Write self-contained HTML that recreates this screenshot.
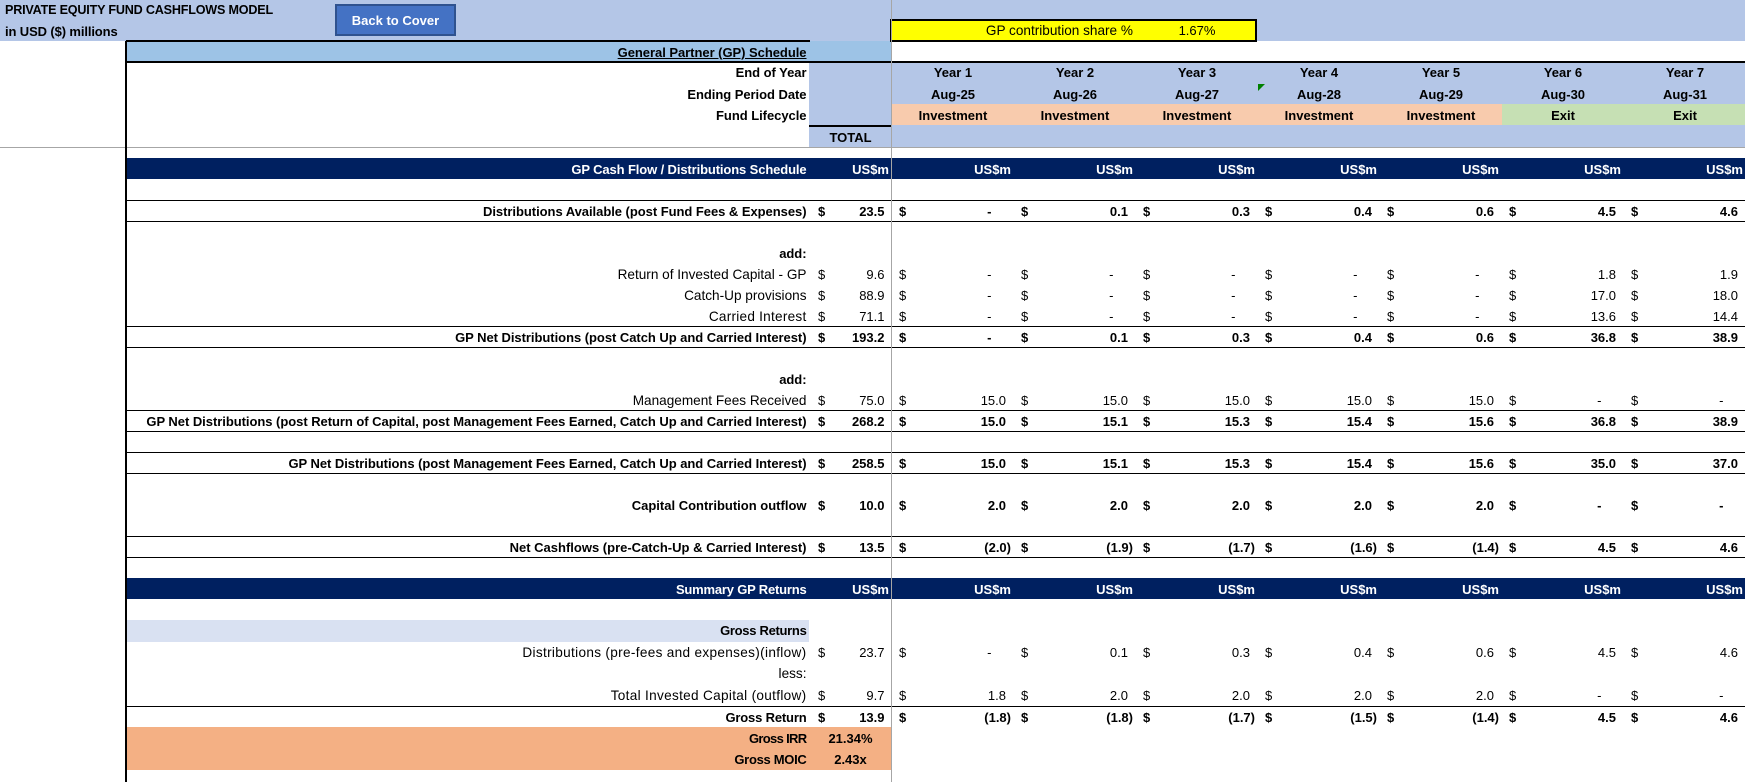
<!DOCTYPE html>
<html lang="en"><head><meta charset="utf-8"><title>GP Schedule</title>
<style>
html,body{margin:0;padding:0;background:#fff}
#s{position:relative;width:1745px;height:782px;overflow:hidden;background:#fff;font:13px/21px "Liberation Sans",Arial,sans-serif;color:#000}
#s div{position:absolute}
.t{background:#000}
.r{position:absolute;left:0;width:1745px;height:21px;margin:0}
.r.b{font-weight:bold}
.l{position:absolute;left:0;width:806.5px;text-align:right;white-space:nowrap;font-size:13.6px}
.b .l{font-size:13px;letter-spacing:-.04px}
.n .l{font-size:13px;letter-spacing:-.12px}
.r i{position:absolute;font-style:normal;top:0;height:21px;width:122px;padding-left:7px;box-sizing:border-box}
.r i:nth-of-type(1){left:809px;width:83px;padding-left:9px}
.r i:nth-of-type(1) u{right:7.5px}
.r i:nth-of-type(2){left:892px}
.r i:nth-of-type(3){left:1014px}
.r i:nth-of-type(4){left:1136px}
.r i:nth-of-type(5){left:1258px}
.r i:nth-of-type(6){left:1380px}
.r i:nth-of-type(7){left:1502px}
.r i:nth-of-type(8){left:1624px}
u{position:absolute;right:8px;top:0;text-decoration:none;white-space:nowrap}
u.p{right:3px}
.r i u.d{right:22.5px}
.n{color:#fff;font-weight:bold}
.n i{padding:0!important}
.n i u,.r.n i:nth-of-type(1) u{right:3px}
.c{text-align:center}
.c i{padding:0!important}
</style></head><body>
<div id="s">
<!-- fills -->
<div style="left:0;top:0;width:1745px;height:41px;background:#b4c6e7"></div>
<div style="left:126px;top:41px;width:766px;height:21px;background:#9dc3e6"></div>
<div style="left:809px;top:62px;width:936px;height:85px;background:#b4c6e7"></div>
<div style="left:892px;top:104px;width:610px;height:21px;background:#f8cbad"></div>
<div style="left:1502px;top:104px;width:243px;height:21px;background:#c6e0b4"></div>
<div style="left:126px;top:158px;width:1619px;height:21px;background:#002060"></div>
<div style="left:126px;top:578px;width:1619px;height:21px;background:#002060"></div>
<div style="left:126px;top:620px;width:683px;height:22px;background:#d9e1f2"></div>
<div style="left:126px;top:727px;width:766px;height:43px;background:#f4b084"></div>
<!-- yellow box -->
<div style="left:890px;top:19px;width:367px;height:23px;background:#ff0;border:2px solid #000;box-sizing:border-box"></div>
<!-- button -->
<div style="left:335px;top:4px;width:121px;height:32px;background:#4472c4;border:2px solid #2f528f;box-sizing:border-box;color:#fff;font-weight:bold;text-align:center;line-height:29px">Back to Cover</div>
<!-- lines -->
<div class="t" style="left:126px;top:40px;width:684px;height:2px"></div>
<div class="t" style="left:126px;top:61px;width:1619px;height:2px"></div>
<div class="t" style="left:809px;top:125px;width:83px;height:2px"></div>
<div style="left:0;top:147px;width:1745px;height:1px;background:#a6a6a6"></div>
<div class="t" style="left:126px;top:200px;width:1619px;height:1px"></div>
<div class="t" style="left:126px;top:221px;width:1619px;height:1px"></div>
<div class="t" style="left:126px;top:326px;width:1619px;height:1px"></div>
<div class="t" style="left:126px;top:347px;width:1619px;height:1px"></div>
<div class="t" style="left:126px;top:410px;width:1619px;height:1px"></div>
<div class="t" style="left:126px;top:431px;width:1619px;height:1px"></div>
<div class="t" style="left:126px;top:452px;width:1619px;height:1px"></div>
<div class="t" style="left:126px;top:473px;width:1619px;height:1px"></div>
<div class="t" style="left:126px;top:536px;width:1619px;height:1px"></div>
<div class="t" style="left:126px;top:557px;width:1619px;height:1px"></div>
<div class="t" style="left:126px;top:706px;width:1619px;height:1px"></div>
<div class="t" style="left:125px;top:41px;width:2px;height:741px"></div>
<div style="left:891px;top:0;width:1px;height:782px;background:#a6a6a6"></div>
<svg style="position:absolute;left:1258px;top:84px" width="7" height="7"><path d="M0 0H7L0 7Z" fill="#008000"/></svg>
<!-- title text -->
<p class="r b" style="top:0"><span style="position:absolute;left:5px;font-size:12.6px;letter-spacing:-.2px">PRIVATE EQUITY FUND CASHFLOWS MODEL</span></p>
<p class="r b" style="top:21px"><span style="position:absolute;left:5px;letter-spacing:-.12px">in USD ($) millions</span></p>
<p class="r" style="top:20px"><span style="position:absolute;left:892px;width:241px;text-align:right;font-size:13.6px">GP contribution share %</span><span style="position:absolute;left:1136px;width:122px;text-align:center">1.67%</span></p>
<p class="r b" style="top:42px"><span class="l"><span style="text-decoration:underline">General Partner (GP) Schedule</span></span></p>
<p class="r b c" style="top:62px"><span class="l">End of Year</span><i style="visibility:hidden"></i><i>Year 1</i><i>Year 2</i><i>Year 3</i><i>Year 4</i><i>Year 5</i><i>Year 6</i><i>Year 7</i></p>
<p class="r b c" style="top:84px"><span class="l">Ending Period Date</span><i style="visibility:hidden"></i><i>Aug-25</i><i>Aug-26</i><i>Aug-27</i><i>Aug-28</i><i>Aug-29</i><i>Aug-30</i><i>Aug-31</i></p>
<p class="r b c" style="top:105px"><span class="l">Fund Lifecycle</span><i style="visibility:hidden"></i><i>Investment</i><i>Investment</i><i>Investment</i><i>Investment</i><i>Investment</i><i>Exit</i><i>Exit</i></p>
<p class="r b c" style="top:127px"><i>TOTAL</i></p>
<p class="r n" style="top:159px"><span class="l">GP Cash Flow / Distributions Schedule</span><i><u>US$m</u></i><i><u>US$m</u></i><i><u>US$m</u></i><i><u>US$m</u></i><i><u>US$m</u></i><i><u>US$m</u></i><i><u>US$m</u></i><i><u>US$m</u></i></p>
<p class="r b" style="top:201px"><span class="l">Distributions Available (post Fund Fees &amp; Expenses)</span><i>$<u>23.5</u></i><i>$<u class="d">-</u></i><i>$<u>0.1</u></i><i>$<u>0.3</u></i><i>$<u>0.4</u></i><i>$<u>0.6</u></i><i>$<u>4.5</u></i><i>$<u>4.6</u></i></p>
<p class="r b" style="top:243px"><span class="l">add:</span></p>
<p class="r" style="top:264px"><span class="l">Return of Invested Capital - GP</span><i>$<u>9.6</u></i><i>$<u class="d">-</u></i><i>$<u class="d">-</u></i><i>$<u class="d">-</u></i><i>$<u class="d">-</u></i><i>$<u class="d">-</u></i><i>$<u>1.8</u></i><i>$<u>1.9</u></i></p>
<p class="r" style="top:285px"><span class="l">Catch-Up provisions</span><i>$<u>88.9</u></i><i>$<u class="d">-</u></i><i>$<u class="d">-</u></i><i>$<u class="d">-</u></i><i>$<u class="d">-</u></i><i>$<u class="d">-</u></i><i>$<u>17.0</u></i><i>$<u>18.0</u></i></p>
<p class="r" style="top:306px"><span class="l" style="letter-spacing:.25px">Carried Interest</span><i>$<u>71.1</u></i><i>$<u class="d">-</u></i><i>$<u class="d">-</u></i><i>$<u class="d">-</u></i><i>$<u class="d">-</u></i><i>$<u class="d">-</u></i><i>$<u>13.6</u></i><i>$<u>14.4</u></i></p>
<p class="r b" style="top:327px"><span class="l">GP Net Distributions (post Catch Up and Carried Interest)</span><i>$<u>193.2</u></i><i>$<u class="d">-</u></i><i>$<u>0.1</u></i><i>$<u>0.3</u></i><i>$<u>0.4</u></i><i>$<u>0.6</u></i><i>$<u>36.8</u></i><i>$<u>38.9</u></i></p>
<p class="r b" style="top:369px"><span class="l">add:</span></p>
<p class="r" style="top:390px"><span class="l">Management Fees Received</span><i>$<u>75.0</u></i><i>$<u>15.0</u></i><i>$<u>15.0</u></i><i>$<u>15.0</u></i><i>$<u>15.0</u></i><i>$<u>15.0</u></i><i>$<u class="d">-</u></i><i>$<u class="d">-</u></i></p>
<p class="r b" style="top:411px"><span class="l">GP Net Distributions (post Return of Capital, post Management Fees Earned, Catch Up and Carried Interest)</span><i>$<u>268.2</u></i><i>$<u>15.0</u></i><i>$<u>15.1</u></i><i>$<u>15.3</u></i><i>$<u>15.4</u></i><i>$<u>15.6</u></i><i>$<u>36.8</u></i><i>$<u>38.9</u></i></p>
<p class="r b" style="top:453px"><span class="l">GP Net Distributions (post Management Fees Earned, Catch Up and Carried Interest)</span><i>$<u>258.5</u></i><i>$<u>15.0</u></i><i>$<u>15.1</u></i><i>$<u>15.3</u></i><i>$<u>15.4</u></i><i>$<u>15.6</u></i><i>$<u>35.0</u></i><i>$<u>37.0</u></i></p>
<p class="r b" style="top:495px"><span class="l" style="letter-spacing:0">Capital Contribution outflow</span><i>$<u>10.0</u></i><i>$<u>2.0</u></i><i>$<u>2.0</u></i><i>$<u>2.0</u></i><i>$<u>2.0</u></i><i>$<u>2.0</u></i><i>$<u class="d">-</u></i><i>$<u class="d">-</u></i></p>
<p class="r b" style="top:537px"><span class="l" style="letter-spacing:0">Net Cashflows (pre-Catch-Up &amp; Carried Interest)</span><i>$<u>13.5</u></i><i>$<u class="p">(2.0)</u></i><i>$<u class="p">(1.9)</u></i><i>$<u class="p">(1.7)</u></i><i>$<u class="p">(1.6)</u></i><i>$<u class="p">(1.4)</u></i><i>$<u>4.5</u></i><i>$<u>4.6</u></i></p>
<p class="r n" style="top:579px"><span class="l" style="letter-spacing:-.2px">Summary GP Returns</span><i><u>US$m</u></i><i><u>US$m</u></i><i><u>US$m</u></i><i><u>US$m</u></i><i><u>US$m</u></i><i><u>US$m</u></i><i><u>US$m</u></i><i><u>US$m</u></i></p>
<p class="r b" style="top:620px"><span class="l" style="letter-spacing:-.3px">Gross Returns</span></p>
<p class="r" style="top:642px"><span class="l" style="letter-spacing:.32px">Distributions (pre-fees and expenses)(inflow)</span><i>$<u>23.7</u></i><i>$<u class="d">-</u></i><i>$<u>0.1</u></i><i>$<u>0.3</u></i><i>$<u>0.4</u></i><i>$<u>0.6</u></i><i>$<u>4.5</u></i><i>$<u>4.6</u></i></p>
<p class="r" style="top:663px"><span class="l">less:</span></p>
<p class="r" style="top:685px"><span class="l" style="letter-spacing:.31px">Total Invested Capital (outflow)</span><i>$<u>9.7</u></i><i>$<u>1.8</u></i><i>$<u>2.0</u></i><i>$<u>2.0</u></i><i>$<u>2.0</u></i><i>$<u>2.0</u></i><i>$<u class="d">-</u></i><i>$<u class="d">-</u></i></p>
<p class="r b" style="top:707px"><span class="l" style="letter-spacing:-.17px">Gross Return</span><i>$<u>13.9</u></i><i>$<u class="p">(1.8)</u></i><i>$<u class="p">(1.8)</u></i><i>$<u class="p">(1.7)</u></i><i>$<u class="p">(1.5)</u></i><i>$<u class="p">(1.4)</u></i><i>$<u>4.5</u></i><i>$<u>4.6</u></i></p>
<p class="r b c" style="top:728px"><span class="l" style="letter-spacing:-.67px">Gross IRR</span><i>21.34%</i></p>
<p class="r b c" style="top:749px"><span class="l" style="letter-spacing:-.3px">Gross MOIC</span><i>2.43x</i></p>
</div>
</body></html>
